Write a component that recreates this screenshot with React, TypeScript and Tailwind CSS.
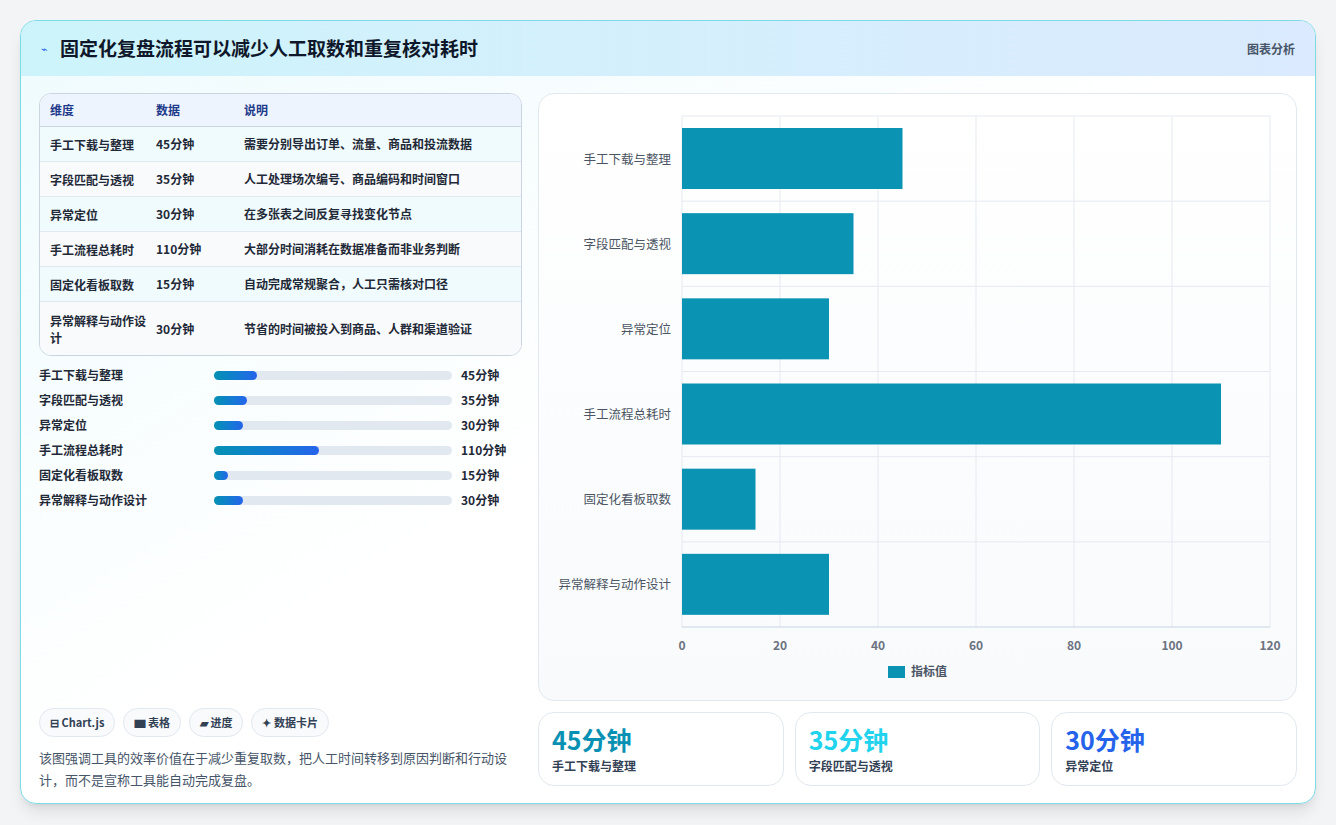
const rows = [
  ["手工下载与整理", 45, "需要分别导出订单、流量、商品和投流数据"],
  ["字段匹配与透视", 35, "人工处理场次编号、商品编码和时间窗口"],
  ["异常定位", 30, "在多张表之间反复寻找变化节点"],
  ["手工流程总耗时", 110, "大部分时间消耗在数据准备而非业务判断"],
  ["固定化看板取数", 15, "自动完成常规聚合，人工只需核对口径"],
  ["异常解释与动作设计", 30, "节省的时间被投入到商品、人群和渠道验证"],
] as const;

const font = { fontFamily: '"Noto Sans CJK SC", "Noto Sans", sans-serif' };

function Chart() {
  const W = 757, H = 607;
  const x0 = 143, x1 = 731, y0 = 22, y1 = 533;
  const band = (y1 - y0) / 6;
  const sx = (v: number) => x0 + (v / 120) * (x1 - x0);
  return (
    <svg width={W} height={H} className="block">
      {[0, 20, 40, 60, 80, 100, 120].map((t) => (
        <g key={t}>
          <line x1={sx(t)} x2={sx(t)} y1={y0} y2={y1} stroke="#e5e9f0" />
          <text x={sx(t)} y={556} textAnchor="middle" fontSize="12" fill="#6b7280" fontWeight="600">{t}</text>
        </g>
      ))}
      {rows.map((r, i) => (
        <g key={i}>
          <line x1={x0} x2={x1} y1={y0 + band * i} y2={y0 + band * i} stroke="#e5e9f0" />
          <rect x={x0} y={y0 + band * i + 12} width={sx(r[1]) - x0} height={61} fill="#0b93b4" />
          <text x={132} y={y0 + band * i + band / 2 + 5} textAnchor="end" fontSize="12.5" fill="#4b5563">{r[0]}</text>
        </g>
      ))}
      <line x1={x0} x2={x1} y1={y1} y2={y1} stroke="#cbd5e1" />
      <rect x={349} y={572} width={17} height={12} fill="#0b93b4" />
      <text x={372} y={582} fontSize="12" fill="#4b5563" fontWeight="600">指标值</text>
    </svg>
  );
}

export default function App() {
  return (
    <div className="min-h-[825px] bg-[#f3f4f6] p-5 pb-0" style={font}>
      <div className="h-[784px] overflow-hidden rounded-2xl border border-[#7ddbe6] bg-gradient-to-br from-[#effbfd] via-white to-white shadow-lg">
        <div className="flex h-[55px] items-center justify-between bg-gradient-to-r from-[#cdf4fb] to-[#dbeafe] px-5">
          <div className="flex items-center gap-3">
            <span className="text-[11px] text-[#2563eb]">⌁</span>
            <h1 className="text-[19px] font-bold text-[#0f172a]">固定化复盘流程可以减少人工取数和重复核对耗时</h1>
          </div>
          <span className="text-[12px] font-semibold text-[#475569]">图表分析</span>
        </div>
        <div className="flex gap-4 px-[18px] pt-[17px]">
          <div className="flex w-[485px] flex-col">
            <div className="overflow-hidden rounded-xl border border-[#cbd5e1] text-[12px] font-semibold text-[#1f2937]">
              <div className="flex h-[33px] items-center border-b border-[#cbd5e1] bg-[#eef4fd] text-[#1e3a8a]">
                <div className="w-[116px] pl-[10px]">维度</div><div className="w-[88px]">数据</div><div>说明</div>
              </div>
              {rows.map((r, i) => (
                <div key={i} className={`flex items-center border-b border-[#e2e8f0] last:border-b-0 ${i % 2 ? "bg-[#f8fafc]" : "bg-[#f0fbfd]"} ${i === 5 ? "h-[53px]" : "h-[35px]"}`}>
                  <div className="w-[116px] pl-[10px] pr-2 leading-[17px]">{r[0]}</div>
                  <div className="w-[88px]">{r[1]}分钟</div>
                  <div>{r[2]}</div>
                </div>
              ))}
            </div>
            <div className="mt-[10px] flex flex-col gap-[7px]">
              {rows.map((r, i) => (
                <div key={i} className="flex h-[18px] items-center text-[12px] font-semibold text-[#1f2937]">
                  <div className="w-[175px]">{r[0]}</div>
                  <div className="h-[9px] w-[238px] rounded-full bg-[#e2e8f0]">
                    <div className="h-full rounded-full bg-gradient-to-r from-[#0891b2] to-[#2563eb]" style={{ width: `${(r[1] / 250) * 100}%` }} />
                  </div>
                  <div className="ml-[9px]">{r[1]}分钟</div>
                </div>
              ))}
            </div>
            <div className="mt-[199px] flex gap-2 text-[11px] font-semibold text-[#334155]">
              {["⊟ Chart.js", "▆ 表格", "▰ 进度", "✦ 数据卡片"].map((t) => (
                <span key={t} className="rounded-full border border-[#e2e8f0] bg-[#f8fafc] px-[10px] py-[5px]">{t}</span>
              ))}
            </div>
            <p className="mt-[10px] text-[13px] leading-[22px] text-[#475569]">该图强调工具的效率价值在于减少重复取数，把人工时间转移到原因判断和行动设计，而不是宣称工具能自动完成复盘。</p>
          </div>
          <div className="flex flex-1 flex-col gap-[11px]">
            <div className="h-[608px] rounded-2xl border border-[#e2e8f0] bg-gradient-to-b from-white to-[#f8fafc]"><Chart /></div>
            <div className="grid grid-cols-3 gap-[11px]">
              {[["45分钟", "手工下载与整理", "text-[#0891b2]"], ["35分钟", "字段匹配与透视", "text-[#22d3ee]"], ["30分钟", "异常定位", "text-[#2563eb]"]].map(([v, l, c]) => (
                <div key={l} className="h-[74px] rounded-2xl border border-[#e2e8f0] bg-white px-[13px] pt-[8px]">
                  <div className={`text-[25px] font-bold leading-[36px] ${c}`}>{v}</div>
                  <div className="text-[12px] font-semibold text-[#334155]">{l}</div>
                </div>
              ))}
            </div>
          </div>
        </div>
      </div>
    </div>
  );
}
